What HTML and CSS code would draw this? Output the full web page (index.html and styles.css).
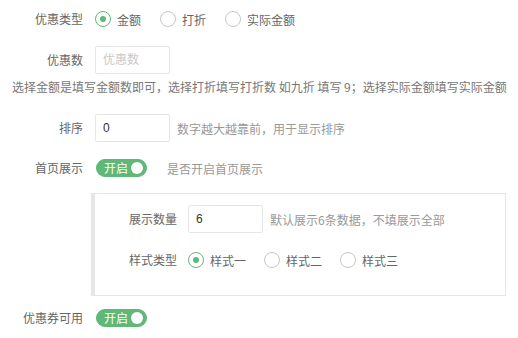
FILE: index.html
```html
<!DOCTYPE html>
<html lang="zh">
<head>
<meta charset="utf-8">
<link rel="stylesheet" href="styles.css">
</head>
<body>
<form class="form">
  <div class="row row-type">
    <label class="label">优惠类型</label>
    <div class="radios">
      <span class="radio checked"><i class="dot"></i>金额</span>
      <span class="radio"><i class="dot"></i>打折</span>
      <span class="radio"><i class="dot"></i>实际金额</span>
    </div>
  </div>
  <div class="row row-amount">
    <label class="label">优惠数</label>
    <input class="input" type="text" placeholder="优惠数">
  </div>
  <p class="note">选择金额是填写金额数即可，选择打折填写打折数 如九折 填写 9；选择实际金额填写实际金额</p>
  <div class="row row-sort">
    <label class="label">排序</label>
    <input class="input" type="text" value="0">
    <span class="hint">数字越大越靠前，用于显示排序</span>
  </div>
  <div class="row row-home">
    <label class="label">首页展示</label>
    <span class="switch"><em>开启</em><i class="knob"></i></span>
    <span class="hint hint-switch">是否开启首页展示</span>
  </div>
  <div class="panel">
    <div class="row row-count">
      <label class="label label-inner">展示数量</label>
      <input class="input" type="text" value="6">
      <span class="hint">默认展示6条数据，不填展示全部</span>
    </div>
    <div class="row row-style">
      <label class="label label-inner">样式类型</label>
      <div class="radios">
        <span class="radio checked"><i class="dot"></i>样式一</span>
        <span class="radio"><i class="dot"></i>样式二</span>
        <span class="radio"><i class="dot"></i>样式三</span>
      </div>
    </div>
  </div>
  <div class="row row-coupon">
    <label class="label">优惠券可用</label>
    <span class="switch"><em>开启</em><i class="knob"></i></span>
  </div>
</form>
</body>
</html>
```
FILE: styles.css
```css
* { box-sizing: border-box; }
html, body {
  margin: 0;
  padding: 0;
  background: #fff;
}
body {
  font-family: "Noto Sans CJK SC", "Liberation Sans", sans-serif;
  font-size: 12px;
  color: #666;
}
.form {
  padding-top: 5px;
}
.row {
  display: flex;
  align-items: center;
  height: 28px;
}
.label {
  width: 83px;
  text-align: right;
  color: #666;
  flex: none;
  margin-right: 12px;
  line-height: 18px;
}
.label-inner {
  width: 82px;
  margin-right: 11px;
}
.radios {
  display: flex;
  align-items: center;
}
.radio {
  display: inline-flex;
  align-items: center;
  margin-right: 19px;
  color: #666;
}
.radio .dot {
  width: 16px;
  height: 16px;
  border: 1px solid #c6c6c6;
  border-radius: 50%;
  margin-right: 6px;
  display: inline-flex;
  align-items: center;
  justify-content: center;
}
.radio.checked .dot {
  border-color: #5fb878;
}
.radio.checked .dot::after {
  content: "";
  width: 6px;
  height: 6px;
  border-radius: 50%;
  background: #5fb878;
}
.input {
  width: 75px;
  height: 28px;
  border: 1px solid #e6e6e6;
  border-radius: 2px;
  padding: 0 7px;
  font-family: "Liberation Sans", "Noto Sans CJK SC", sans-serif;
  font-size: 12px;
  color: #333;
  outline: none;
  flex: none;
}
.input::placeholder {
  color: #c9c9c9;
  font-family: "Noto Sans CJK SC", sans-serif;
}
.hint {
  margin-left: 7px;
  color: #999;
  white-space: nowrap;
}
.hint-switch {
  margin-left: 20px;
}
.row-amount {
  margin-top: 13px;
}
.note {
  margin: 4px 0 0 12px;
  line-height: 18px;
  color: #777;
  white-space: nowrap;
}
.row-sort {
  margin-top: 18px;
}
.row-home {
  margin-top: 12px;
}
.switch {
  display: inline-flex;
  align-items: center;
  justify-content: space-between;
  width: 51px;
  height: 18px;
  margin-left: 1px;
  padding: 0 3px 0 7px;
  border-radius: 9px;
  background: #5fb878;
  border: 1px solid #5fb878;
  flex: none;
}
.switch em {
  font-style: normal;
  color: #fff;
  font-size: 12px;
  line-height: 16px;
}
.switch .knob {
  width: 12px;
  height: 12px;
  border-radius: 50%;
  background: #fff;
}
.panel {
  margin: 11px 12px 0 91px;
  width: 415px;
  border: 1px solid #e6e6e6;
  border-left: 4px solid #e6e6e6;
  padding: 11px 0 21px 0;
}
.row-style {
  margin-top: 13px;
}
.row-style .radio {
  margin-right: 18px;
}
.row-coupon {
  margin-top: 8px;
}
```
